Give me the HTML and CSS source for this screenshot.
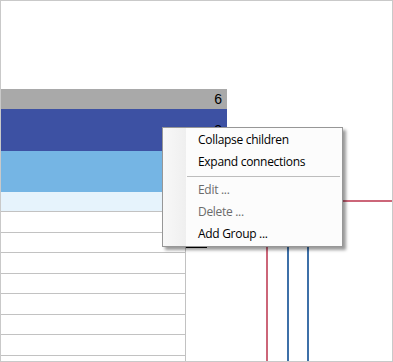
FILE: index.html
```html
<!DOCTYPE html>
<html>
<head>
<meta charset="utf-8">
<link rel="stylesheet" href="styles.css">
</head>
<body>
<div class="frame">
  <div class="panel">
    <div class="row row-head"><span class="num">6</span></div>
    <div class="row row-dark"><span class="num">3</span></div>
    <div class="row row-light"></div>
    <div class="list">
      <div class="row-pale"></div>
      <div class="row-white"></div>
      <div class="row-white"></div>
      <div class="row-white"></div>
      <div class="row-white"></div>
      <div class="row-white"></div>
      <div class="row-white"></div>
      <div class="row-white"></div>
      <div class="row-white"></div>
    </div>
  </div>
  <div class="canvas">
    <svg class="diagram" width="206" height="360" viewBox="0 0 206 360">
      <rect x="0.5" y="225.5" width="20" height="21" fill="none" stroke="#000" stroke-width="1"/>
      <rect x="80" y="199" width="126" height="2" fill="#cc6679"/>
      <rect x="80" y="199" width="2" height="161" fill="#cc6679"/>
      <rect x="101" y="190" width="2" height="170" fill="#3e70a8"/>
      <rect x="121" y="190" width="2" height="170" fill="#3e70a8"/>
    </svg>
  </div>
  <div class="menu">
    <div class="item">Collapse children</div>
    <div class="item">Expand connections</div>
    <div class="sep"></div>
    <div class="item disabled">Edit ...</div>
    <div class="item disabled">Delete ...</div>
    <div class="item">Add Group ...</div>
  </div>
</div>
</body>
</html>
```

FILE: styles.css
```css
html, body {
  margin: 0;
  padding: 0;
  background: #fff;
}

.frame {
  position: relative;
  width: 393px;
  height: 362px;
  box-sizing: border-box;
  border: 1px solid #c9c9c9;
  display: flex;
  overflow: hidden;
  background: #fff;
}

.panel {
  width: 185px;
  flex: none;
  display: flex;
  flex-direction: column;
  padding-top: 88px;
  box-sizing: border-box;
}

.row {
  width: 226px;
  flex: none;
  display: flex;
  justify-content: flex-end;
  align-items: center;
  box-sizing: border-box;
  padding-right: 5px;
  font-family: "Liberation Sans", Arial, sans-serif;
  font-size: 14px;
  color: #000;
}

.row-head {
  height: 20px;
  background: #a9a9a9;
}

.row-dark {
  height: 42px;
  background: #3d51a3;
}

.row-light {
  height: 41px;
  background: #75b5e4;
}

.list {
  flex: 1;
  width: 185px;
  box-sizing: border-box;
  border-right: 1px solid #c2c2c2;
}

.row-pale {
  height: 20px;
  box-sizing: border-box;
  background: #e6f3fc;
  border-bottom: 1px solid #c2c2c2;
}

.row-white {
  height: 20.57px;
  box-sizing: border-box;
  border-bottom: 1px solid #c2c2c2;
}

.canvas {
  flex: 1;
  display: flex;
}

.diagram {
  display: block;
}

.menu {
  position: absolute;
  left: 161px;
  top: 126px;
  width: 181px;
  height: 120px;
  box-sizing: border-box;
  border: 1px solid #979797;
  padding: 1px 2px;
  background: linear-gradient(to right, #f8f8f8 0, #efefef 23px, #fcfcfc 23px);
  box-shadow: 3px 3px 3px rgba(0, 0, 0, 0.4);
  font-family: "Open Sans", "Noto Sans", sans-serif;
  font-size: 12px;
  letter-spacing: -0.3px;
  color: #000;
}

.item {
  height: 22px;
  line-height: 22px;
  padding-left: 33px;
  white-space: nowrap;
}

.item.disabled {
  color: #6b6b6b;
}

.sep {
  height: 6px;
  margin-left: 22px;
  display: flex;
  align-items: center;
}

.sep::before {
  content: "";
  display: block;
  width: 100%;
  height: 1px;
  background: #bdbdbd;
}
```
